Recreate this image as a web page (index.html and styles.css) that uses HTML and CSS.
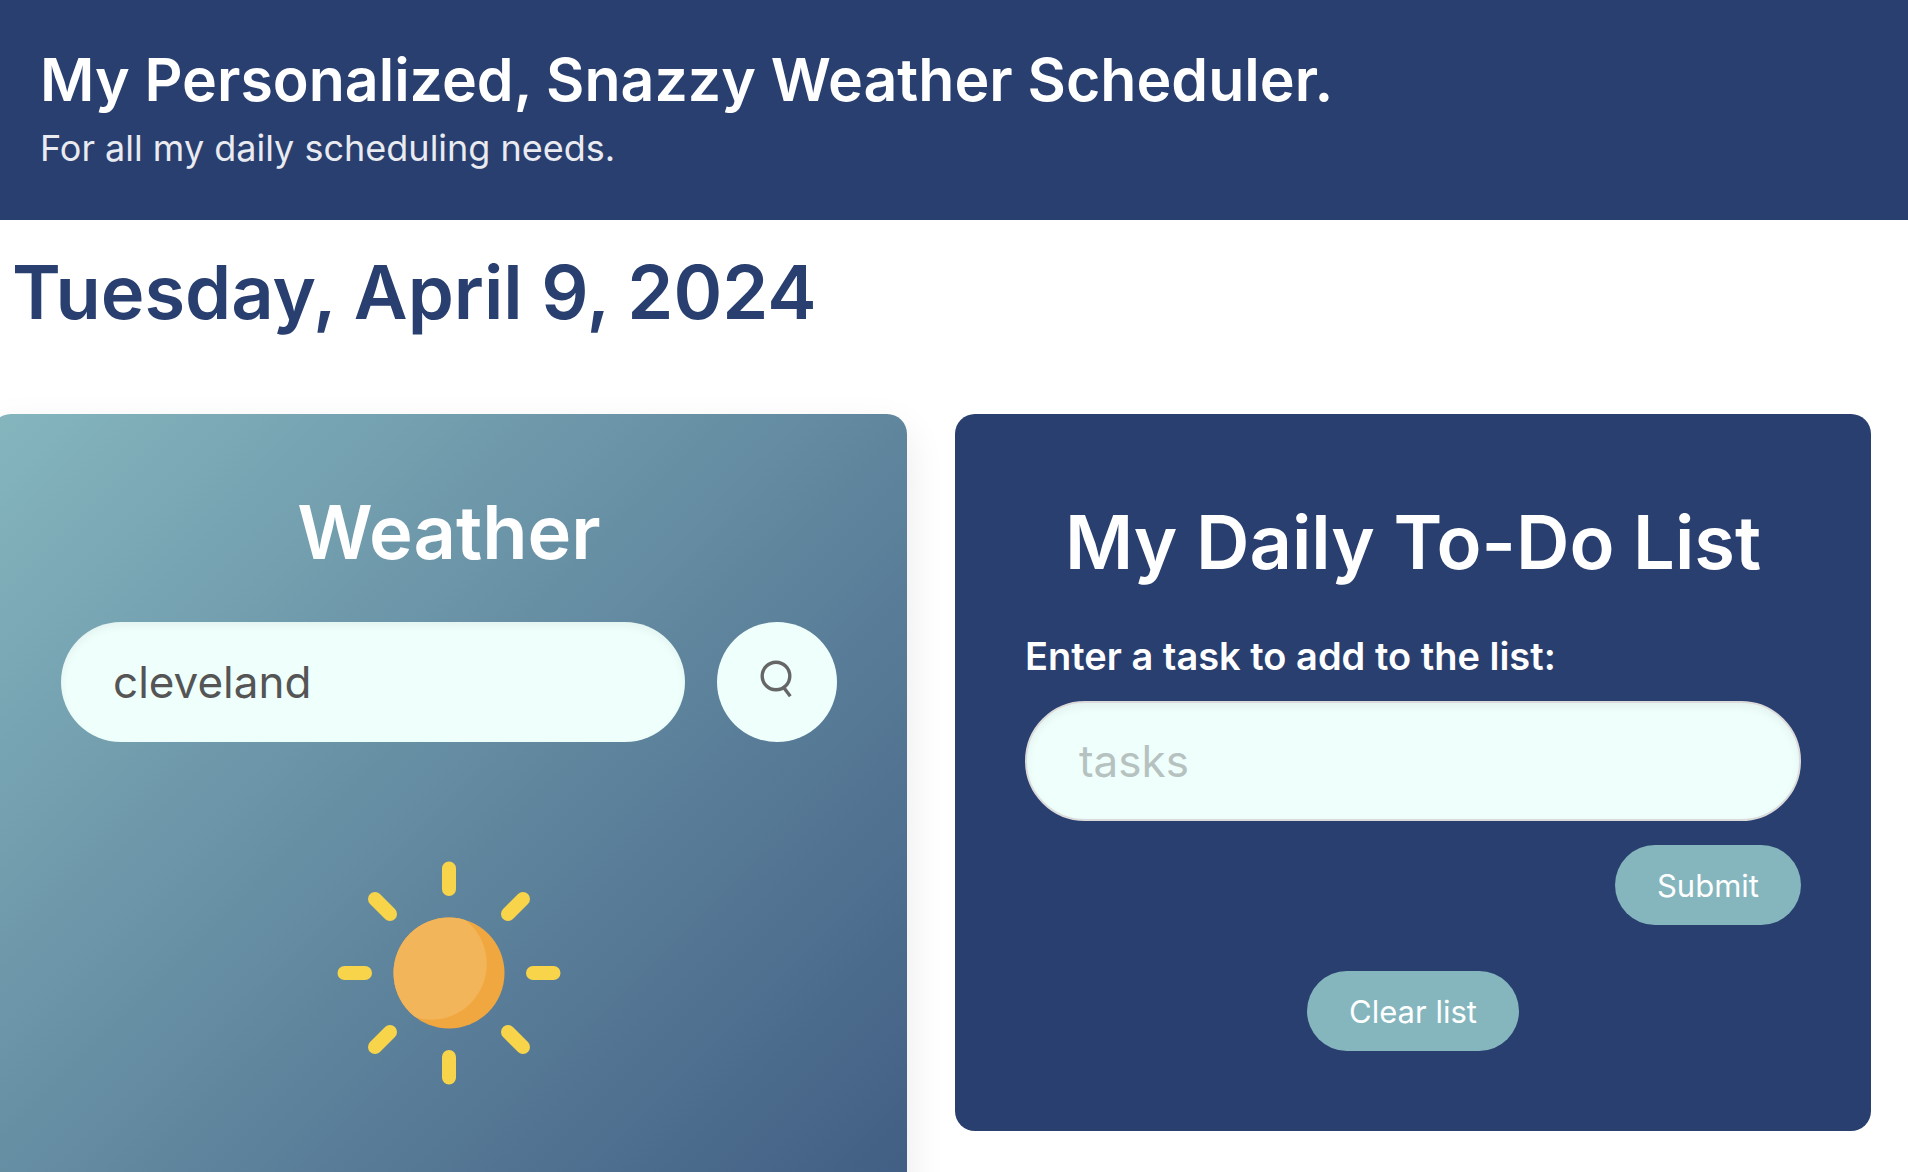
FILE: index.html
```html
<!DOCTYPE html>
<html lang="en">
<head>
  <meta charset="utf-8">
  <meta name="viewport" content="width=device-width, initial-scale=1">
  <title>Weather Scheduler</title>
  <link rel="stylesheet" href="styles.css">
</head>
<body>
  <header class="hero">
    <h1 class="hero-title">My Personalized, Snazzy Weather Scheduler.</h1>
    <p class="hero-subtitle">For all my daily scheduling needs.</p>
  </header>

  <main class="page">
    <h2 class="date">Tuesday, April 9, 2024</h2>

    <div class="columns">
      <section class="card card-weather">
        <h2 class="card-title">Weather</h2>
        <form class="search">
          <input class="field search-field" type="text" value="cleveland" aria-label="City">
          <button class="search-button" type="button" aria-label="Search">
            <svg class="search-icon" viewBox="0 0 34 46" aria-hidden="true">
              <circle cx="16" cy="17" r="13.8" fill="none" stroke="#666" stroke-width="3.4"/>
              <path d="M23.5 28.2 30.3 37.2" fill="none" stroke="#666" stroke-width="3.4"/>
            </svg>
          </button>
        </form>
        <svg class="sun" viewBox="-112 -112 224 224" role="img" aria-label="Sunny">
          <g stroke="#f8d44a" stroke-width="14" stroke-linecap="round">
            <path d="M0-104.5V-84M0 84V104.5M-104.5 0H-84M84 0H104.5M-74-74-59-59M59 59 74 74M-74 74-59 59M59-59 74-74"/>
          </g>
          <clipPath id="disc"><circle r="55.5"/></clipPath>
          <circle r="55.5" fill="#f1a73f"/>
          <circle cx="-18" cy="-9" r="55.8" fill="#f2b559" clip-path="url(#disc)"/>
        </svg>
      </section>

      <section class="card card-todo">
        <h2 class="card-title">My Daily To-Do List</h2>
        <form class="todo-form">
          <label class="label" for="task">Enter a task to add to the list:</label>
          <input class="field todo-field" id="task" type="text" placeholder="tasks">
          <button class="button button-submit" type="button">Submit</button>
        </form>
        <button class="button button-clear" type="button">Clear list</button>
      </section>
    </div>
  </main>
</body>
</html>
```
FILE: styles.css
```css
* {
  box-sizing: border-box;
}

body {
  margin: 0;
  background: #fff;
  color: #293f6f;
  font-family: Inter, "Liberation Sans", sans-serif;
}

h1, h2, p {
  margin: 0;
}

.hero {
  padding: 40px 40px 44px;
  background: #293f6f;
}

.hero-title {
  color: #fff;
  font-size: 59px;
  font-weight: 600;
  line-height: 80px;
}

.hero-subtitle {
  color: #e9ebf1;
  font-size: 36px;
  line-height: 56px;
}

.date {
  padding: 32px 12px 82px;
  font-size: 74px;
  font-weight: 600;
  line-height: 80px;
}

.columns {
  display: grid;
  grid-template-columns: 1fr 1fr;
  align-items: start;
  gap: 48px;
  margin: 0 37px 0 -9px;
}

.card {
  display: flex;
  flex-direction: column;
  padding: 88px 70px 80px;
  border-radius: 20px;
  background: #293f6f;
  color: #fff;
}

.card-weather {
  min-height: 1360px;
  padding-top: 78px;
  background: linear-gradient(135deg, #85b6be, #293f6f);
  box-shadow: 0 16px 40px rgba(0, 0, 0, 0.09);
}

.card-title {
  font-size: 74px;
  font-weight: 600;
  line-height: 80px;
  text-align: center;
}

.field {
  width: 100%;
  height: 120px;
  padding: 0 52px;
  border: 0;
  border-radius: 60px;
  background: #effffc;
  box-shadow: inset 0 4px 8px rgba(0, 0, 0, 0.05);
  color: #555;
  font: inherit;
  font-size: 44px;
}

.search {
  display: flex;
  gap: 32px;
  margin-top: 50px;
}

.search-field {
  flex: 1;
  min-width: 0;
}

.search-button {
  display: flex;
  align-items: center;
  justify-content: center;
  width: 120px;
  height: 120px;
  padding: 0;
  border: 0;
  border-radius: 50%;
  background: #effffc;
}

.search-icon {
  width: 34px;
  height: 46px;
}

.sun {
  align-self: center;
  width: 224px;
  height: 224px;
  margin-top: 119px;
}

.todo-form {
  display: flex;
  flex-direction: column;
  margin-top: 45px;
}

.label {
  font-size: 38px;
  font-weight: 600;
  line-height: 58px;
}

.todo-field {
  margin-top: 16px;
  border: 2px solid #dbdbdb;
}

.todo-field::placeholder {
  color: #b6c2c0;
  opacity: 1;
}

.button {
  height: 80px;
  padding: 0 42px;
  border: 0;
  border-radius: 40px;
  background: #85b6be;
  color: #fff;
  font: inherit;
  font-size: 31px;
}

.button-submit {
  align-self: flex-end;
  margin-top: 24px;
}

.button-clear {
  align-self: center;
  margin-top: 46px;
}
```
